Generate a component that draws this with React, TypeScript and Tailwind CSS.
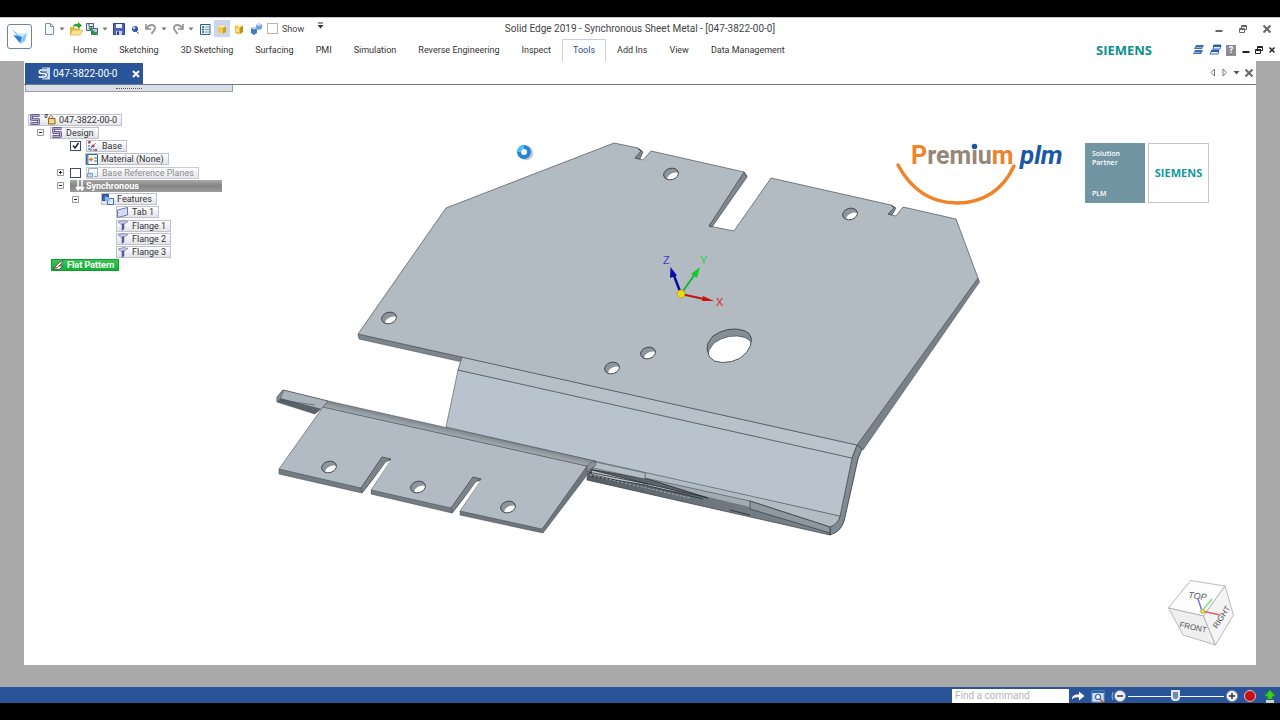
import type { ReactNode } from "react";

const menuTabs = [
  "Home",
  "Sketching",
  "3D Sketching",
  "Surfacing",
  "PMI",
  "Simulation",
  "Reverse Engineering",
  "Inspect",
  "Tools",
  "Add Ins",
  "View",
  "Data Management",
];

const holes = [
  { x: 671, y: 174 },
  { x: 850, y: 214 },
  { x: 389, y: 318 },
  { x: 648, y: 353 },
  { x: 612, y: 368 },
  { x: 329, y: 467 },
  { x: 418, y: 487 },
  { x: 508, y: 507 },
];

function Caret() {
  return (
    <button aria-label="More options" className="flex h-4 w-[10px] items-center justify-center">
      <svg width="6" height="4" viewBox="0 0 6 4">
        <path d="M0.5 0.5h5L3 3.5z" fill="#777" />
      </svg>
    </button>
  );
}

function ToolButton({ label, active, children }: { label: string; active?: boolean; children: ReactNode }) {
  return (
    <button
      aria-label={label}
      className={
        active
          ? "flex h-[17px] w-4 items-center justify-center bg-[#ccd5ee]"
          : "flex h-[17px] w-4 items-center justify-center"
      }
    >
      <svg width="14" height="14" viewBox="0 0 14 14" fill="none">
        {children}
      </svg>
    </button>
  );
}

function QuickAccess() {
  return (
    <div className="flex w-[290px] shrink-0 items-center gap-px pl-[3px]">
      <div className="flex items-center">
        <ToolButton label="New">
          <path d="M3.5 1.5h5l3 3v8h-8z" fill="#f4f7fc" stroke="#7b8db5" />
          <path d="M8.5 1.5v3h3" stroke="#7b8db5" />
        </ToolButton>
        <Caret />
      </div>
      <div className="flex items-center">
        <ToolButton label="Open">
          <path d="M1 5h4l1 1.500h5V13H1z" fill="#e2b93b" />
          <path d="M1 13l2.500-5H14l-3 5z" fill="#fbe38a" stroke="#c39a22" strokeWidth=".5" />
          <path d="M4 5c0-3 3-4 5-3V0l4 3.500L9 7V5C7 4 6 4 4 5z" fill="#2fa02f" />
        </ToolButton>
        <ToolButton label="Copy from">
          <path d="M1.500 1.500h7v7h-7zM4 1.500v3h4" stroke="#4d5d8f" fill="#dfe6f6" />
          <path d="M6.500 6.500h6v6h-6z" stroke="#4d5d8f" fill="#bcc9e8" />
          <path d="M3 6l4-1v2l3 3 2 0-1 3-4-1V10z" fill="#2f9a3f" />
        </ToolButton>
        <Caret />
      </div>
      <div className="flex items-center">
        <ToolButton label="Save">
          <path d="M1.500 1.500h11v11h-11z" fill="#4d63b5" stroke="#303f86" />
          <path d="M4 2h6v4H4z" fill="#eef1fa" />
          <path d="M4 9h6v4H4z" fill="#c9d1ea" />
          <path d="M5 9.500h2V13H5z" fill="#303f86" />
        </ToolButton>
        <ToolButton label="Find">
          <circle cx="7" cy="7" r="3" fill="#2c5aa8" />
          <circle cx="6" cy="6" r="1.400" fill="#a9cdf5" />
          <path d="M8.500 9.500l2 2" stroke="#444" />
        </ToolButton>
        <ToolButton label="Undo">
          <path d="M2 2v5h5" stroke="#8a8a8a" strokeWidth="1.500" />
          <path d="M2.500 6.500C5 2 11 2 11 6c0 3-2 3-3.500 6" stroke="#999" strokeWidth="2" />
        </ToolButton>
        <Caret />
      </div>
      <div className="flex items-center">
        <ToolButton label="Redo">
          <path d="M12 2v5H7" stroke="#8a8a8a" strokeWidth="1.500" />
          <path d="M11.500 6.500C9 2 3 2 3 6c0 3 2 3 3.500 6" stroke="#999" strokeWidth="2" />
        </ToolButton>
        <Caret />
      </div>
      <ToolButton label="Edge bar">
        <path d="M2.500 2.500h9.500v10H2.500z" fill="#e8f3f8" stroke="#2d6185" />
        <path d="M4 5h2M4 7.500h2M4 10h2" stroke="#206080" strokeWidth="1.500" />
        <path d="M7 5h4M7 7.500h4M7 10h4" stroke="#7d98a8" />
      </ToolButton>
      <ToolButton label="Synchronous" active>
        <path d="M3 5l3-1.500 4 .500 1 1.500V10l-3 1.500-5-1z" fill="#f2c94e" />
        <path d="M3 5l3-1.500 4 .500-2 1.500z" fill="#fff3b8" />
        <path d="M8 6l3-1v5l-3 1.500z" fill="#cf9a2c" />
      </ToolButton>
      <ToolButton label="Ordered">
        <path d="M3 3.500v7c2 2 5 2 7 .500l1-7.500z" fill="#edbd3f" />
        <path d="M8 5l3-1.500V10l-3 2z" fill="#c58c1f" />
        <path d="M3 3.500L6 2l5 1.500-3 2z" fill="#fff2ae" />
        <path d="M4 6h3v4H4z" fill="#fbe08a" />
      </ToolButton>
      <ToolButton label="Assembly parts">
        <path d="M2 6l3-1 3 1v5l-3 2-3-2z" fill="#3f7fc0" />
        <path d="M7 3l3-2 3 1.500v4L10 8 7 7z" fill="#6aa3d8" />
        <path d="M2 6l3-1 3 1-3 1.500zM7 3l3-2 3 1.500L10 4z" fill="#c3defa" />
      </ToolButton>
      <label className="flex items-center gap-1 pl-[2px] text-[9px] leading-3 text-[#444]">
        <input
          type="checkbox"
          className="h-[11px] w-[11px] appearance-none border border-[#b5b5b5] bg-white"
        />
        Show
      </label>
      <button aria-label="Customize toolbar" className="ml-auto flex h-4 w-4 items-start justify-center pt-px">
        <svg width="7" height="8" viewBox="0 0 7 8">
          <path d="M1 1h5" stroke="#333" />
          <path d="M0.500 3h6L3.500 6.500z" fill="#333" />
        </svg>
      </button>
    </div>
  );
}

function WindowIcon({ kind, color }: { kind: "min" | "restore" | "close"; color: string }) {
  return (
    <svg width="10" height="10" viewBox="0 0 10 10" fill="none" stroke={color}>
      {kind === "min" && <path d="M1.500 7h7" strokeWidth="2" />}
      {kind === "restore" && <path d="M1.500 4.500h5v4h-5zM3.500 4.500v-3h5v4h-2M1.500 5.500h5M3.500 2.500h5" />}
      {kind === "close" && <path d="M1.500 1.500l7 7M8.500 1.500l-7 7" strokeWidth="2" />}
    </svg>
  );
}

function Header() {
  return (
    <header className="flex h-[44px] shrink-0 border-t border-[#c8c8c8] bg-white">
      <div className="flex w-[38px] shrink-0 justify-center pt-[6px]">
        <button aria-label="Application menu" className="h-[25px] w-[25px] rounded-[3px] border border-[#6b83a8]">
          <svg width="23" height="23" viewBox="0 0 23 23">
            <path d="M4 4l10 8-1 6z" fill="#8ccbf0" />
            <path d="M5 10l9 2-2 6z" fill="#2c7fd0" />
            <path d="M19 8l-5 4-2 7 5-3z" fill="#8cc4f2" />
            <path d="M7 8l7 4 5-4-6 1z" fill="#bfe3fa" />
          </svg>
        </button>
      </div>
      <div className="flex min-w-0 flex-1 flex-col">
        <div className="flex h-[21px] shrink-0 items-center">
          <QuickAccess />
          <h1 className="flex-1 truncate text-center text-[10px] leading-4 text-[#444]">
            Solid Edge 2019 - Synchronous Sheet Metal - [047-3822-00-0]
          </h1>
          <div className="flex w-[328px] shrink-0 items-center justify-end gap-[14px] pr-2">
            <button aria-label="Minimize"><WindowIcon kind="min" color="#666" /></button>
            <button aria-label="Restore"><WindowIcon kind="restore" color="#666" /></button>
            <button aria-label="Close"><WindowIcon kind="close" color="#666" /></button>
          </div>
        </div>
        <div className="flex min-h-0 flex-1 items-center">
          <nav className="flex h-full flex-1 pl-[24px]">
            {menuTabs.map((tab) => (
              <button
                key={tab}
                className={
                  tab === "Tools"
                    ? "border border-b-0 border-[#c9ccd3] px-[10px] pt-px text-[9px] whitespace-nowrap text-[#2f4a8a]"
                    : "px-[11px] pt-[2px] text-[9px] whitespace-nowrap text-[#333]"
                }
              >
                {tab}
              </button>
            ))}
          </nav>
          <div className="pr-10 font-['Open_Sans',sans-serif] text-[13px] leading-4 font-bold text-[#0b8f8f]">
            SIEMENS
          </div>
          <div className="flex items-center gap-[3px] pr-[3px]">
            <button aria-label="Collapse ribbon">
              <svg width="14" height="12" viewBox="0 0 14 12">
                <path d="M4 1h8l-2 4H2z" fill="#3d6fb5" />
                <path d="M3 6h8l-2 4H1z" fill="#3d6fb5" />
                <path d="M4 3.500h6M2 8.500h6" stroke="#8fb6a8" />
              </svg>
            </button>
            <button aria-label="Ribbon style">
              <svg width="14" height="12" viewBox="0 0 14 12">
                <path d="M5 1h7l-1 4H4z" fill="#eef4fb" stroke="#3d6fb5" />
                <path d="M3 6h7l-1 4H1z" fill="#eef4fb" stroke="#3d6fb5" />
                <path d="M4 2h8M2 7h8" stroke="#2d5cae" strokeWidth="2" />
              </svg>
            </button>
            <button aria-label="Help" className="h-[11px] w-[10px] bg-[#8d8d8d] text-center text-[9px] leading-[11px] font-bold text-white">
              ?
            </button>
            <button aria-label="Minimize document" className="pl-[2px]"><WindowIcon kind="min" color="#222" /></button>
            <button aria-label="Restore document"><WindowIcon kind="restore" color="#222" /></button>
            <button aria-label="Close document">
              <svg width="10" height="10" viewBox="0 0 10 10" stroke="#222">
                <path d="M2.500 2.500l5 5M7.500 2.500l-5 5" strokeWidth="1.500" />
              </svg>
            </button>
          </div>
        </div>
      </div>
    </header>
  );
}

function DocumentTabs() {
  return (
    <div className="flex h-6 shrink-0 items-end justify-between border-b border-[#6d7896] pl-px">
      <div className="flex h-[21px] items-center bg-[#2a5599] pr-[2px] pl-[13px] text-white">
        <svg width="13" height="13" viewBox="0 0 13 13" fill="none">
          <path d="M4 .5h8v12H4z" fill="#c9d7ee" />
          <path d="M9 3H3.500c-3 0-3 3.500 0 3.500h2.500c3 0 3 3.500 0 3.500H.5" stroke="#2a5599" strokeWidth="3" />
          <path d="M9 3H3.500c-3 0-3 3.500 0 3.500h2.500c3 0 3 3.500 0 3.500H.5" stroke="#fff" strokeWidth="1.500" />
        </svg>
        <span className="pr-[13px] pl-[2px] text-[10px] leading-4 whitespace-nowrap">047-3822-00-0</span>
        <button aria-label="Close tab">
          <svg width="10" height="10" viewBox="0 0 10 10">
            <path d="M2 2l6 6M8 2L2 8" stroke="#fff" strokeWidth="2" />
          </svg>
        </button>
      </div>
      <div className="flex h-full items-center gap-[3px] pr-[2px]">
        <button aria-label="Previous tab">
          <svg width="9" height="9" viewBox="0 0 9 9">
            <path d="M6.500 1v7L3 4.500z" fill="#fff" stroke="#777" />
          </svg>
        </button>
        <button aria-label="Next tab">
          <svg width="9" height="9" viewBox="0 0 9 9">
            <path d="M3 1v7l3.500-3.500z" fill="#fff" stroke="#777" />
          </svg>
        </button>
        <button aria-label="Tab list">
          <svg width="9" height="9" viewBox="0 0 9 9">
            <path d="M1.500 3h6l-3 3.500z" fill="#555" />
          </svg>
        </button>
        <button aria-label="Close all"><WindowIcon kind="close" color="#666" /></button>
      </div>
    </div>
  );
}

function TreeIcon({ kind }: { kind: string }) {
  return (
    <svg width="12" height="11" viewBox="0 0 12 11" fill="none" className="shrink-0">
      {kind === "part" && (
        <>
          <path d="M10.500 1.500H2.500v4h7v4H1.500" stroke="#4b3b7e" strokeWidth="2.500" strokeLinejoin="round" />
          <path d="M10 1.500H2.500v4h7v4H2" stroke="#cfc4ec" strokeWidth=".8" strokeLinejoin="round" />
        </>
      )}
      {kind === "lock" && (
        <>
          <path d="M4.500 4.500h6.500V10H4.500z" fill="#f5d58a" stroke="#8a6420" />
          <path d="M9 4.500C9 1 5.500.5 5 4" stroke="#8a6420" />
          <path d="M0 2h4M1 .5h3M1 3.500h2" stroke="#555" />
        </>
      )}
      {kind === "base" && (
        <>
          <path d="M2 1v8h8M2 9l7-7" stroke="#38699e" strokeDasharray="2 1" />
          <path d="M1 1h3M9 8v2" stroke="#b33" strokeWidth="1.500" />
          <circle cx="6" cy="5" r="1.500" fill="#b33c55" />
        </>
      )}
      {kind === "material" && (
        <>
          <path d="M.5.5h11v10H.5z" fill="#fff" stroke="#3d6a8f" />
          <path d="M1 1h1.500v9H1z" fill="#5a92c4" />
          <path d="M3 5.500h4M5 3.500v4" stroke="#e07a20" strokeWidth="1.500" />
          <path d="M8 4h3M8 7h3" stroke="#3d6a8f" />
        </>
      )}
      {kind === "planes" && (
        <>
          <path d="M1.500 6V1.500h9v8H7" stroke="#9ab0c6" />
          <path d="M.5 6.500h5v3.500H.5z" fill="#c7daec" stroke="#7b9cbb" />
        </>
      )}
      {kind === "features" && (
        <>
          <path d="M.5.5h6v6h-6z" fill="#3c6eb4" stroke="#234b86" />
          <path d="M5.500 4.500h6v6h-6z" fill="#dcecfb" stroke="#3c6eb4" />
          <path d="M3 3h4.500v4.500H3z" fill="#8ab5e3" />
        </>
      )}
      {kind === "tab" && <path d="M.5 3L10.500.5v7.500L.5 10.500z" fill="#d5daf0" stroke="#707bab" />}
      {kind === "flange" && (
        <>
          <path d="M1 2l6-1.500 4 1-4 2.500v5l-2 1.500V5z" fill="#c9c9ec" stroke="#7b7bb0" strokeWidth=".7" />
          <path d="M5 4l2-1v6l-2 1.500z" fill="#5a5a93" />
        </>
      )}
      {kind === "flat" && (
        <>
          <path d="M1 8.500l4-2.500h6l-4 3.500z" fill="#fff" stroke="#5b2038" strokeWidth=".7" />
          <path d="M3 7l5-5 3-1.500-1 2.500-5 5z" fill="#f4eaf0" stroke="#7a2c40" strokeWidth=".7" />
        </>
      )}
    </svg>
  );
}

function Expander({ open }: { open?: boolean }) {
  return (
    <button aria-label={open ? "Collapse" : "Expand"} className="mr-[6px] h-[7px] w-[7px] shrink-0">
      <svg width="7" height="7" viewBox="0 0 7 7" fill="#fff" stroke="#999">
        <path d="M.5.5h6v6h-6z" />
        <path d={open ? "M2 3.500h3" : "M2 3.500h3M3.500 2v3"} stroke="#222" />
      </svg>
    </button>
  );
}

function TreeCheck({ label, checked }: { label: string; checked?: boolean }) {
  return (
    <span className="relative mr-[5px] flex h-[10px] w-[11px] shrink-0">
      <input
        type="checkbox"
        aria-label={label}
        defaultChecked={checked}
        className="peer h-[10px] w-[11px] appearance-none border border-[#3d4a6e] bg-white"
      />
      <svg
        width="11"
        height="10"
        viewBox="0 0 11 10"
        fill="none"
        className="pointer-events-none absolute inset-0 hidden peer-checked:block"
      >
        <path d="M3 4.500l2 2.500 3.500-5" stroke="#1d2540" strokeWidth="1.500" />
      </svg>
    </span>
  );
}

function Chip({ icons, children, muted }: { icons: string[]; children: ReactNode; muted?: boolean }) {
  return (
    <button
      className={
        muted
          ? "flex h-3 items-center gap-[3px] border border-[#c9cbd0] bg-linear-to-b from-white to-[#e6e7ec] pr-1 text-[9px] leading-[10px] whitespace-nowrap text-[#8b8b8b]"
          : "flex h-3 items-center gap-[3px] border border-[#c0c2c9] bg-linear-to-b from-white to-[#e2e3ea] pr-1 text-[9px] leading-[10px] whitespace-nowrap text-[#333]"
      }
    >
      {icons.map((icon) => (
        <TreeIcon key={icon} kind={icon} />
      ))}
      {children}
    </button>
  );
}

function PathFinder() {
  return (
    <aside className="flex w-[209px] flex-col">
      <div className="ml-px flex h-[7px] items-center justify-center border border-t-0 border-[#9a9da6] bg-[#dcdee5]">
        <div className="w-[26px] border-t border-dotted border-[#555]" />
      </div>
      <ul className="mt-[21px] grid h-[159px] auto-rows-fr items-center [&>li]:flex [&>li]:items-center">
        <li className="pl-1">
          <Chip icons={["part", "lock"]}>047-3822-00-0</Chip>
        </li>
        <li className="pl-[13px]">
          <Expander open />
          <Chip icons={["part"]}>Design</Chip>
        </li>
        <li className="pl-[46px]">
          <TreeCheck label="Base" checked />
          <Chip icons={["base"]}>Base</Chip>
        </li>
        <li className="pl-[61px]">
          <Chip icons={["material"]}>Material (None)</Chip>
        </li>
        <li className="pl-[33px]">
          <Expander />
          <TreeCheck label="Base Reference Planes" />
          <Chip icons={["planes"]} muted>Base Reference Planes</Chip>
        </li>
        <li className="pl-[33px]">
          <Expander open />
          <button className="flex h-3 w-[152px] items-center gap-px bg-linear-to-b from-[#a8a8a8] via-[#858585] to-[#9c9c9c] pl-[5px] text-[9px] leading-3 font-bold text-white">
            <svg width="10" height="11" viewBox="0 0 10 11" fill="none" stroke="#fff" strokeWidth="1.500">
              <path d="M3 0v10M7 0v10M1 7l2 3 2-3 2 3 2-3" />
            </svg>
            Synchronous
          </button>
        </li>
        <li className="pl-[48px]">
          <Expander open />
          <span className="pl-[16px]">
            <Chip icons={["features"]}>Features</Chip>
          </span>
        </li>
        <li className="pl-[92px]">
          <Chip icons={["tab"]}>Tab 1</Chip>
        </li>
        <li className="pl-[92px]">
          <Chip icons={["flange"]}>Flange 1</Chip>
        </li>
        <li className="pl-[92px]">
          <Chip icons={["flange"]}>Flange 2</Chip>
        </li>
        <li className="pl-[92px]">
          <Chip icons={["flange"]}>Flange 3</Chip>
        </li>
        <li className="pl-[27px]">
          <button className="flex h-3 items-center gap-[3px] border border-[#0f9f2c] bg-linear-to-b from-[#35c653] to-[#10b034] pr-1 text-[9px] leading-[10px] font-bold text-white">
            <TreeIcon kind="flat" />
            Flat Pattern
          </button>
        </li>
      </ul>
    </aside>
  );
}

function Model() {
  return (
    <svg
      className="absolute inset-0 h-full w-full"
      viewBox="24 85 1232 580"
      fontFamily='"Liberation Sans", Arial, sans-serif'
      strokeLinejoin="round"
    >
      <defs>
        <linearGradient id="bend" x1="0" y1="0" x2="-0.060" y2="1">
          <stop offset="0" stopColor="#b5bdc5" />
          <stop offset="1" stopColor="#bbc5ce" />
        </linearGradient>
        <linearGradient id="lip" gradientUnits="userSpaceOnUse" x1="460" y1="430" x2="458" y2="439">
          <stop offset="0" stopColor="#7a828a" />
          <stop offset="1" stopColor="#b0b8bf" />
        </linearGradient>
        <linearGradient id="under" gradientUnits="userSpaceOnUse" x1="590" y1="470" x2="830" y2="530">
          <stop offset="0" stopColor="#555d65" />
          <stop offset="0.5" stopColor="#6d767f" />
          <stop offset="1" stopColor="#7c858d" />
        </linearGradient>
        {holes.map((h, i) => (
          <clipPath key={i} id={`hole${i}`}>
            <ellipse cx={h.x} cy={h.y} rx="7.500" ry="5.700" transform={`rotate(-15 ${h.x} ${h.y})`} />
          </clipPath>
        ))}
        <clipPath id="bore">
          <path d="M707 349l1-6 5-7 7-4 8-2.500 8-.500 8 1.500 5 3 2.500 5-1 7-4 7-7 6-8 3-9 1-8-1.500-5-4z" />
        </clipPath>
      </defs>

      {/* edges behind the faces */}
      <g stroke="#4a5056" strokeWidth=".6">
        <path d="M978 278l1.500 4L863 450l-6-5z" fill="#79828b" />
        <path d="M358 334l104 23-2 4.500-101-22.500z" fill="#7d858d" />
      </g>

      {/* lower flange and bottom bend */}
      <path d="M588 467l57 4 105 30 80 26 0 8-243-55z" fill="url(#under)" stroke="#33393f" strokeWidth=".7" />
      <path d="M595 461l50 11 105 29 0 6-46-11-60-12-52-14z" fill="#a1abb4" />
      <path d="M592 470l45 6 55 17-40-5-60-14z" fill="#bcc4ca" />
      <path d="M588 469l60 10 60 19-60-14zM590 476l55 9 58 14M588 472l60 12M730 510l20 5" stroke="#262b30" strokeWidth=".8" fill="#5c646b" />
      <path d="M590 475l100 23" stroke="#aab2ba" strokeDasharray="2 2" fill="none" />
      <path d="M857 445l5 4-4 10-13 58q-2 14-15 18l0-8q8-3 10-11l12-58z" fill="#818b94" stroke="#33393f" strokeWidth=".8" />
      <path d="M645 471l195 45q-2 8-10 11l-80-26-105-23z" fill="#b1bcc5" stroke="#42484e" strokeWidth=".6" />
      <path d="M750 501l80 26 0 6-80-24z" fill="#8e98a1" stroke="#33393f" strokeWidth=".7" />
      <path d="M458 370l394 88-12 58-246-55-148-34z" fill="#b8c3cd" stroke="#4a5056" strokeWidth=".6" />
      <path d="M595 462l50 11v6l-52-11z" fill="#b4bec7" stroke="#4a5056" strokeWidth=".5" />
      <path d="M462 357l395 88q-3 6-5 13L458 370z" fill="url(#bend)" stroke="#4a5056" strokeWidth=".7" />

      {/* top plate */}
      <path
        d="M358 334L446 208 614 143 638 148 642 151 635 158 643 160 651 151 744 172 747 176 709 226 734 231 771 178 891 205 895 208 888 214 896 216 903 207 956 219 978 278 857 445z"
        fill="#b2bac2"
        stroke="#4a5056"
        strokeWidth=".7"
      />
      <path d="M744 172l3 5-35 50-3-1z" fill="#7e868e" stroke="#33393f" strokeWidth=".6" />
      <path d="M638 149l5 3-3 7-5-1 6-7z" fill="#7e868e" stroke="#33393f" strokeWidth=".6" />
      <path d="M891 205l5 3-4 7-4-1 6-6z" fill="#7e868e" stroke="#33393f" strokeWidth=".6" />

      {/* slotted flange */}
      <g stroke="#4a5056" strokeWidth=".6">
        <path d="M277 397l6-7 45 11-6 7-7 6-38-12z" fill="#596169" />
        <path d="M280 398l3-8 45 11-5 6-1 2z" fill="#aab3bb" stroke="none" />
        <path d="M277 397l6-7 0 3-4 8-2 1z" fill="#858e96" strokeWidth=".5" />
        <path d="M283 390l45 11M280 400l35 5" fill="none" />
        <path d="M279 469v5l83 19 26-32 3-2-9-2z" fill="#737b83" />
        <path d="M371 490v4l81 19 26-31 3-3-8-2z" fill="#737b83" />
        <path d="M460 511v4l83 18 51-67 2-5z" fill="#6d757d" />
        <path
          d="M323 407l-44 62 82 19 21-31 9 2-20 31 80 18 22-31 8 2-21 32 82 18 45-63z"
          fill="#b2bbc3"
        />
        <path d="M361 488l21-31 9 2-4 2-25 32z" fill="#7b838b" strokeWidth=".6" />
        <path d="M451 508l22-31 8 2-4 2-25 32z" fill="#7b838b" strokeWidth=".6" />
        <path d="M364 492L386 462 390 461 370.500 490v4zM454 512L476 482 480 481 459.500 511v3z" fill="#fff" stroke="none" />
        <path d="M328 401l267 60-8 5-264-59z" fill="url(#lip)" />
        <path d="M595 461l1 4-9 7v-6q3-4 8-5z" fill="#8b949c" strokeWidth=".6" />
      </g>

      {holes.map((h, i) => (
        <g key={i}>
          <g clipPath={`url(#hole${i})`}>
            <rect x={h.x - 9} y={h.y - 9} width="18" height="18" fill="#8c949c" />
            <ellipse cx={h.x + 2} cy={h.y + 4} rx="7" ry="4.500" transform={`rotate(-18 ${h.x} ${h.y})`} fill="#fff" />
          </g>
          <ellipse
            cx={h.x}
            cy={h.y}
            rx="7.500"
            ry="5.700"
            transform={`rotate(-15 ${h.x} ${h.y})`}
            fill="none"
            stroke="#33393f"
            strokeWidth=".8"
          />
        </g>
      ))}
      <g clipPath="url(#bore)">
        <rect x="700" y="325" width="60" height="45" fill="#858d95" />
        <path
          d="M708 356l1-6 5-7 7-4 8-2.500 8-.500 8 1.500 5 3 2.500 5-1 7-4 7-7 6-8 3-9 1-8-1.500-5-4z"
          fill="#fff"
          stroke="#33393f"
          strokeWidth=".6"
        />
      </g>
      <path
        d="M707 349l1-6 5-7 7-4 8-2.500 8-.500 8 1.500 5 3 2.500 5-1 7-4 7-7 6-8 3-9 1-8-1.500-5-4z"
        fill="none"
        stroke="#33393f"
        strokeWidth=".8"
      />

      {/* axis triad */}
      <path d="M681 294L673 273" stroke="#0b0b9a" strokeWidth="2.500" />
      <path d="M670.500 267l-0.500 11 7-2.500z" fill="#0b0bb0" />
      <path d="M681 294l14-20" stroke="#1fae3a" strokeWidth="2" />
      <path d="M700 267l-9 7 6 4z" fill="#14cc28" />
      <path d="M681 294l23 5" stroke="#c21313" strokeWidth="2" />
      <path d="M714 301l-11-5-1 5z" fill="#d01010" />
      <circle cx="681" cy="294" r="4" fill="#e8dc1a" stroke="#a89c10" strokeWidth=".6" />
      <g fontSize="11">
        <text x="663" y="264" fill="#3b3bd0">Z</text>
        <text x="700" y="264" fill="#2fd04a">Y</text>
        <text x="716" y="306" fill="#e02020">X</text>
      </g>

      {/* busy pointer */}
      <circle cx="526" cy="153" r="6" stroke="#c8c8c8" strokeWidth="2.500" fill="none" />
      <circle cx="524" cy="152" r="5" stroke="#2384dc" strokeWidth="4" fill="#fff" />
      <path d="M519 152a5 5 0 0 1 5-5" stroke="#4fc0ee" strokeWidth="4" fill="none" />
    </svg>
  );
}

function Logos() {
  return (
    <div className="flex items-start pt-[53px] pr-[47px]">
      <svg width="176" height="72" viewBox="891 136 176 72" fontFamily="Roboto, sans-serif" fontWeight="700">
        <text x="911" y="162" fontSize="25" fill="#f0822a">
          P<tspan fill="#968878">remiu</tspan>m
        </text>
        <text x="1020" y="162" fontSize="26" fontStyle="italic" fill="#1b57a6">
          plm
        </text>
        <circle cx="974.500" cy="144.500" r="2.800" fill="#1b57a6" />
        <path d="M898 163C912 189 932 201 957 201c26 0 46-13 57-37" fill="none" stroke="#f0822a" strokeWidth="3.500" strokeLinecap="round" />
      </svg>
      <div className="mt-[5px] ml-[18px] flex h-[60px] w-[60px] flex-col bg-[#7195a3] px-[7px] pt-[6px] pb-[5px] font-['Open_Sans',sans-serif] text-[7px] leading-[9px] font-semibold text-white">
        <span>Solution</span>
        <span>Partner</span>
        <span className="mt-auto">PLM</span>
      </div>
      <div className="mt-[5px] ml-[3px] flex h-[60px] w-[61px] items-center justify-center border border-[#c6c6c6] bg-white font-['Open_Sans',sans-serif] text-[11px] font-bold text-[#0f9999]">
        SIEMENS
      </div>
    </div>
  );
}

function ViewCube() {
  return (
    <button aria-label="View orientation" className="absolute right-[21px] bottom-[18px]">
      <svg width="68" height="68" viewBox="1167 579 68 68" fontFamily='"Liberation Sans", Arial, sans-serif' fill="#555">
        <g stroke="#aaa" strokeWidth=".8" strokeLinejoin="round">
          <path d="M1168.500 608l22-27.500 34.500 5.500-21.500 30z" fill="#fdfdfd" />
          <path d="M1168.500 608l35 8 12 29-32.500-10z" fill="#efefef" />
          <path d="M1225 586l8.500 29-18 30-12-29z" fill="#f4f4f4" />
        </g>
        <text x="1188" y="598" fontSize="9" fontStyle="italic" transform="rotate(7 1188 598)">TOP</text>
        <text x="1179" y="627" fontSize="8" transform="rotate(12 1179 627)">FRONT</text>
        <text x="1217" y="629" fontSize="8" transform="rotate(-57 1217 629)">RIGHT</text>
        <path d="M1202 611l-4-12" stroke="#7b74e0" strokeWidth="1.500" />
        <path d="M1202 611l10-12" stroke="#7be08a" strokeWidth="1.500" />
        <path d="M1202 611l18 4" stroke="#e06070" strokeWidth="1.500" />
        <circle cx="1202.500" cy="611.500" r="2" fill="#e8e04a" stroke="#a09a20" strokeWidth=".6" />
      </svg>
    </button>
  );
}

function StatusBar() {
  return (
    <footer className="flex h-4 shrink-0 items-end justify-end bg-[#295497]">
      <input
        type="text"
        aria-label="Find a command"
        placeholder="Find a command"
        className="h-[14px] w-[117px] bg-white px-[3px] text-[10px] leading-[14px] placeholder:text-[#b5b5b5]"
      />
      <div className="flex h-[14px] items-center">
        <button aria-label="Run" className="ml-[2px]">
          <svg width="14" height="12" viewBox="0 0 14 12">
            <path d="M1 9.500c0-3 1-5 7-5V1.500l5.500 4.500L8 10.500V7.500C4 7 2.500 8 1 9.500z" fill="#fff" />
          </svg>
        </button>
        <button aria-label="Command finder" className="ml-[6px]">
          <svg width="14" height="13" viewBox="0 0 14 13" fill="none">
            <path d="M1 1h12v11H1z" fill="#c9dcf4" stroke="#6f9bd6" />
            <path d="M1 2h12" stroke="#2c5fae" strokeWidth="2" />
            <circle cx="7" cy="7" r="2.500" fill="#fff" stroke="#3a62a0" strokeWidth="1.200" />
            <path d="M9 9l3.500 4" stroke="#a9552a" strokeWidth="1.500" />
          </svg>
        </button>
        <button aria-label="Zoom out" className="ml-[6px]">
          <svg width="16" height="14" viewBox="0 0 16 14" fill="none">
            <path d="M2 3q-2 4 0 8" stroke="#8fb2e4" />
            <circle cx="9" cy="7" r="5.500" fill="#eef1f5" stroke="#8596ad" />
            <path d="M6 7h6" stroke="#333" strokeWidth="1.500" />
          </svg>
        </button>
        <input
          type="range"
          aria-label="Zoom"
          defaultValue={49}
          className="mx-px h-[14px] w-[96px] appearance-none bg-transparent [&::-webkit-slider-runnable-track]:h-px [&::-webkit-slider-runnable-track]:bg-white [&::-webkit-slider-thumb]:-mt-[6px] [&::-webkit-slider-thumb]:h-[11px] [&::-webkit-slider-thumb]:w-[9px] [&::-webkit-slider-thumb]:appearance-none [&::-webkit-slider-thumb]:rounded-b-[4px] [&::-webkit-slider-thumb]:border-2 [&::-webkit-slider-thumb]:border-[#dfe8f3] [&::-webkit-slider-thumb]:bg-[#6d8cae]"
        />
        <button aria-label="Zoom in">
          <svg width="14" height="14" viewBox="0 0 14 14">
            <circle cx="7" cy="7" r="5.500" fill="#eef1f5" stroke="#8596ad" />
            <path d="M4 7h6M7 4v6" stroke="#333" strokeWidth="1.500" />
          </svg>
        </button>
        <button aria-label="Record" className="ml-1">
          <svg width="14" height="14" viewBox="0 0 14 14">
            <circle cx="7" cy="7" r="5.500" fill="#c90f14" stroke="#d8c3c8" />
          </svg>
        </button>
        <button aria-label="Upload" className="mr-[3px] ml-[6px]">
          <svg width="14" height="14" viewBox="0 0 14 14">
            <path d="M7 1l5.500 6H9.500v3h-5V7h-3z" fill="#35d01c" stroke="#1f9410" strokeWidth=".6" />
            <path d="M3 11h8v3H3z" fill="#cfd3d8" />
          </svg>
        </button>
      </div>
    </footer>
  );
}

export default function App() {
  return (
    <div className="flex min-h-screen flex-col bg-black py-[17px] font-[Roboto,'Open_Sans',sans-serif]">
      <Header />
      <main className="flex flex-1 flex-col bg-[#a9a9a9] px-6 pb-[22px]">
        <div className="flex flex-1 flex-col bg-white">
          <DocumentTabs />
          <section className="relative flex-1">
            <Model />
            <div className="relative flex items-start justify-between">
              <PathFinder />
              <Logos />
            </div>
            <ViewCube />
          </section>
        </div>
      </main>
      <StatusBar />
    </div>
  );
}
